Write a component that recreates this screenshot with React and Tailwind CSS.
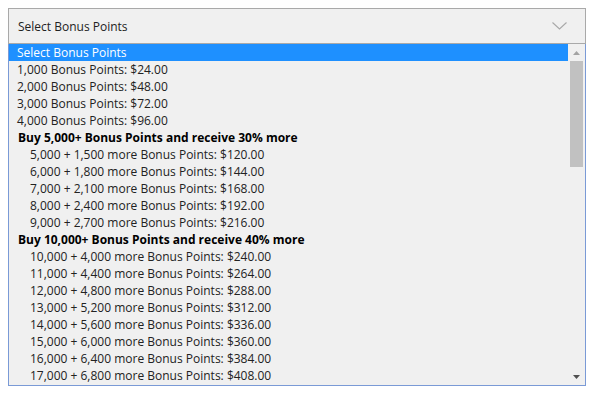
export default function App() {
  const rows = [
    { t: 'Select Bonus Points', sel: true },
    { t: '1,000 Bonus Points: $24.00' },
    { t: '2,000 Bonus Points: $48.00' },
    { t: '3,000 Bonus Points: $72.00' },
    { t: '4,000 Bonus Points: $96.00' },
    { t: 'Buy 5,000+ Bonus Points and receive 30% more', group: true },
    { t: '5,000 + 1,500 more Bonus Points: $120.00', sub: true },
    { t: '6,000 + 1,800 more Bonus Points: $144.00', sub: true },
    { t: '7,000 + 2,100 more Bonus Points: $168.00', sub: true },
    { t: '8,000 + 2,400 more Bonus Points: $192.00', sub: true },
    { t: '9,000 + 2,700 more Bonus Points: $216.00', sub: true },
    { t: 'Buy 10,000+ Bonus Points and receive 40% more', group: true },
    { t: '10,000 + 4,000 more Bonus Points: $240.00', sub: true },
    { t: '11,000 + 4,400 more Bonus Points: $264.00', sub: true },
    { t: '12,000 + 4,800 more Bonus Points: $288.00', sub: true },
    { t: '13,000 + 5,200 more Bonus Points: $312.00', sub: true },
    { t: '14,000 + 5,600 more Bonus Points: $336.00', sub: true },
    { t: '15,000 + 6,000 more Bonus Points: $360.00', sub: true },
    { t: '16,000 + 6,400 more Bonus Points: $384.00', sub: true },
    { t: '17,000 + 6,800 more Bonus Points: $408.00', sub: true },
  ]

  return (
    <div className="w-[591px] h-[395px] bg-white p-2 font-['Open_Sans',sans-serif] text-[12px] text-[#222]">
      <div className="w-[578px]">
        {/* Closed select */}
        <div className="h-[36px] border border-[#a9a9a9] bg-[#f0f0f0] flex items-center pt-[2px] pl-[9px] pr-[18px]">
          <span>Select Bonus Points</span>
          <svg className="ml-auto -mt-[2px]" width="15" height="8" viewBox="0 0 15 8">
            <path d="M0.5 0.5 L7.5 7 L14.5 0.5" fill="none" stroke="#a8a8a8" strokeWidth="1.1" />
          </svg>
        </div>

        {/* Open list */}
        <div className="h-[342px] border border-t-0 border-[#7a9ad6] bg-[#f0f0f0] flex overflow-hidden">
          <div className="flex-1">
            {rows.map(r => (
              <div key={r.t}
                className={`h-[17px] pt-[1px] leading-[16px] whitespace-nowrap ${
                  r.sel ? 'bg-[#1e90ff] text-white pl-[8px]'
                    : r.group ? 'font-bold pl-[9px] text-black'
                    : r.sub ? 'pl-[21px]' : 'pl-[8px]'
                }`}>
                {r.t}
              </div>
            ))}
          </div>

          {/* Scrollbar */}
          <div className="w-[17px] flex flex-col items-center bg-[#f0f0f0]">
            <div className="h-[17px] flex items-center justify-center">
              <svg width="7" height="4" viewBox="0 0 7 4"><path d="M0 4 L3.5 0 L7 4 Z" fill="#a3a3a3" /></svg>
            </div>
            <div className="w-[13px] h-[106px] bg-[#c1c1c1]" />
            <div className="mt-auto h-[17px] flex items-center justify-center">
              <svg width="7" height="4" viewBox="0 0 7 4"><path d="M0 0 L7 0 L3.5 4 Z" fill="#505050" /></svg>
            </div>
          </div>
        </div>
      </div>
    </div>
  )
}
